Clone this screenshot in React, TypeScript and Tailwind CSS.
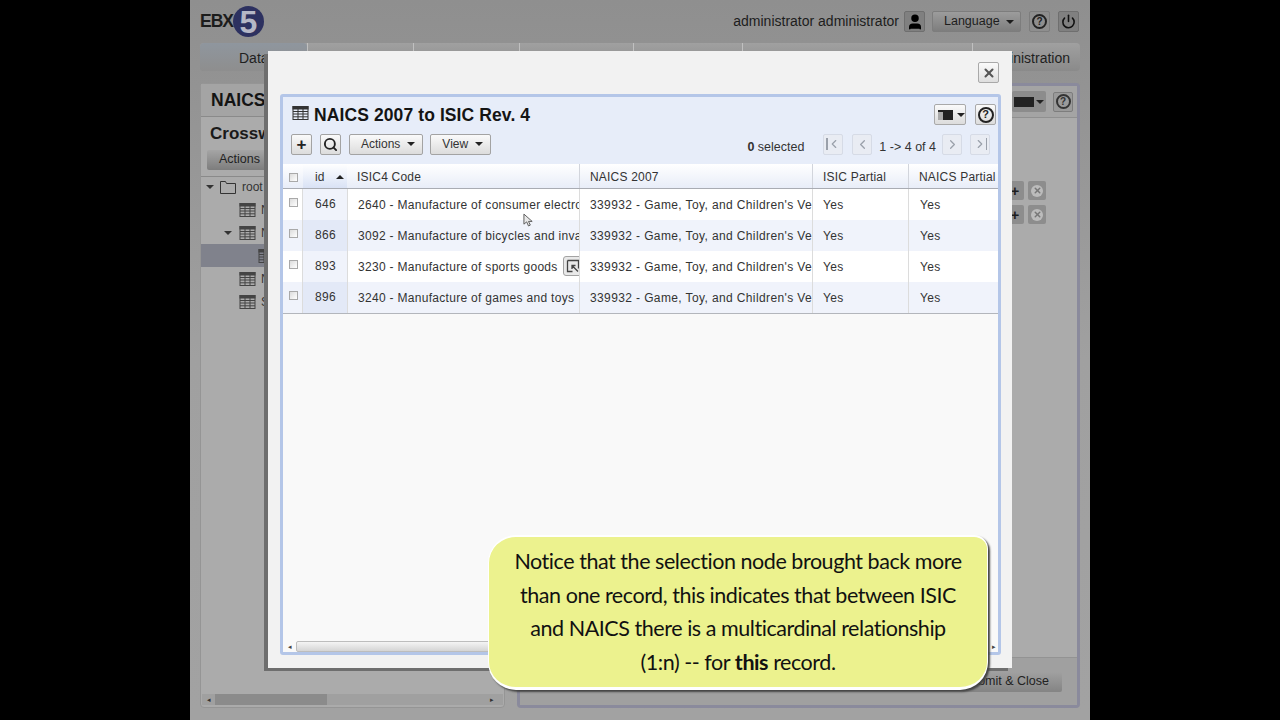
import { ChevronLeft, ChevronRight, Power, Search, User, X } from 'lucide-react'

const rows = [
  { id: '646', isic: '2640 - Manufacture of consumer electro' },
  { id: '866', isic: '3092 - Manufacture of bicycles and inva' },
  { id: '893', isic: '3230 - Manufacture of sports goods' },
  { id: '896', isic: '3240 - Manufacture of games and toys' },
]

const gridCols = 'grid-cols-[20px_44px_232px_233px_96px_90px]'

function TableIcon({ className }: { className: string }) {
  return (
    <svg viewBox="0 0 16 14" className={className} fill="none" stroke="currentColor" strokeWidth="1">
      <rect x="0.5" y="0.5" width="15" height="13" />
      <rect x="0.5" y="0.5" width="15" height="2.5" fill="currentColor" />
      <path d="M0.5 5.5h15M0.5 8h15M0.5 10.8h15M5.5 3v10.5M10.5 3v10.5" />
    </svg>
  )
}

function Caret({ className }: { className: string }) {
  return <span className={`inline-block w-0 h-0 border-x-[4px] border-x-transparent border-t-[4px] ${className}`} />
}

function HelpIcon({ className }: { className: string }) {
  return (
    <span className={`flex items-center justify-center rounded-full border-2 font-bold ${className}`}>?</span>
  )
}

function Checkbox({ className = '' }: { className?: string }) {
  return <span className={`block w-[9px] h-[9px] border border-[#a9a9a9] bg-gradient-to-br from-[#dcdcdc] to-white ${className}`} />
}

function PagerButton({ children }: { children: React.ReactNode }) {
  return (
    <span className="flex items-center justify-center w-[20px] h-[21px] rounded-[2px] border border-[#d6dbe6] bg-[#e9ecf3] text-[#9aa0aa]">
      {children}
    </span>
  )
}

function ToolButton({ label }: { label: string }) {
  return (
    <span className="flex items-center gap-[7px] h-[21px] pl-[11px] pr-[7px] rounded-[2px] border border-[#a3a3a3] bg-gradient-to-b from-[#fafafa] to-[#dcdcdc] text-[12px] text-[#333]">
      {label}
      <Caret className="border-t-[#222]" />
    </span>
  )
}

function Background() {
  return (
    <div className="flex flex-col h-full px-[10px] bg-gradient-to-b from-[#8f8f8f] via-[#a0a0a0] to-[#a2a2a2]">
      {/* Top bar */}
      <div className="flex items-center justify-between h-[43px] shrink-0">
        <div className="flex items-center">
          <span className="w-[33px] text-[17.5px] font-bold tracking-[-1px] text-[#1c1c1c]">EBX</span>
          <span className="flex items-center justify-center w-[31px] h-[31px] rounded-full bg-[#2d3160] text-[32px] font-bold leading-none text-[#b5b7c6]">5</span>
        </div>
        <div className="flex items-center pr-[1px]">
          <span className="text-[14px] text-[#1d1d1d]">administrator administrator</span>
          <span className="flex items-center justify-center w-[21px] h-[21px] ml-[5px] rounded-[2px] border border-[#6f6f6f] bg-[#808080]">
            <User className="w-[18px] h-[18px] text-black" fill="black" strokeWidth={2} />
          </span>
          <span className="flex items-center gap-[6px] h-[21px] w-[89px] pl-[11px] ml-[7px] rounded-[2px] border border-[#7d7d7d] bg-gradient-to-b from-[#9c9c9c] to-[#7e7e7e] text-[12.5px] text-[#1d1d1d]">
            Language
            <Caret className="border-t-[#1d1d1d]" />
          </span>
          <span className="flex items-center justify-center w-[21px] h-[21px] ml-[8px] rounded-[2px] border border-[#7d7d7d] bg-[#8e8e8e]">
            <HelpIcon className="w-[15px] h-[15px] text-[10px] border-[#222] text-[#222]" />
          </span>
          <span className="flex items-center justify-center w-[21px] h-[21px] ml-[8px] rounded-[2px] border border-[#6f6f6f] bg-[#808080]">
            <Power className="w-[15px] h-[15px] text-[#111]" strokeWidth={2.5} />
          </span>
        </div>
      </div>

      {/* Tabs */}
      <div className="flex h-[28px] shrink-0 rounded-[4px] bg-gradient-to-b from-[#a0a0a0] to-[#8a8a8a] text-[14px] text-[#1f1f1f]">
        <span className="flex items-center w-[107px] pl-[39px] pt-[2px] rounded-[4px] bg-gradient-to-b from-[#8f969e] to-[#8e8e8e]">Data</span>
        <span className="w-[106px] border-l border-[#c0c0c0]" />
        <span className="w-[106px] border-l border-[#c0c0c0]" />
        <span className="w-[114px] border-l border-[#c0c0c0]" />
        <span className="w-[109px] border-l border-[#c0c0c0]" />
        <span className="w-[230px] border-l border-[#c0c0c0]" />
        <span className="flex items-center justify-end flex-1 pr-[10px] pt-[2px] border-l border-[#c0c0c0]">Administration</span>
      </div>

      {/* Panels */}
      <div className="flex gap-[12px] mt-[12px] mb-[12px] flex-1 min-h-0">
        <div className="flex flex-col w-[305px] rounded-[4px] border border-[#959595] bg-[#ababab]">
          <div className="h-[33px] px-[10px] flex items-center text-[17.5px] font-bold text-[#141414] border-b border-[#8a8a8a] bg-[#a4a4a4]">NAICS</div>
          <div className="h-[60px] flex flex-col border-b border-[#8a8a8a]">
            <div className="px-[9px] pt-[4px] text-[17px] font-bold text-[#1a1a1a]">Crossw</div>
            <div className="flex items-center gap-[4px] ml-[6px] mt-[3px] w-[70px] h-[20px] pl-[12px] bg-gradient-to-b from-[#a5a5a5] to-[#7d7d7d] rounded-[2px] text-[12.5px] text-[#222]">Actions</div>
          </div>
          <div className="flex-1 -mt-[2px] text-[12px] text-[#333]">
            <div className="flex items-center h-[23px] pl-[5px] gap-[6px]">
              <Caret className="border-t-[#333]" />
              <svg viewBox="0 0 16 14" className="w-[16px] h-[14px]" fill="none" stroke="#333"><path d="M0.5 13.5V1.5h5l1 2h9v10z" /></svg>
              <span>root</span>
            </div>
            <div className="flex items-center h-[23px] pl-[38px] gap-[5px]"><TableIcon className="w-[17px] h-[14px] text-[#444]" />N</div>
            <div className="flex items-center h-[23px] pl-[23px] gap-[5px]"><Caret className="border-t-[#333]" /><TableIcon className="w-[17px] h-[14px] ml-[2px] text-[#444]" />N</div>
            <div className="flex items-center h-[23px] pl-[57px] bg-[#80828c]"><TableIcon className="w-[17px] h-[14px] text-[#444]" /></div>
            <div className="flex items-center h-[23px] pl-[38px] gap-[5px]"><TableIcon className="w-[17px] h-[14px] text-[#444]" />N</div>
            <div className="flex items-center h-[23px] pl-[38px] gap-[5px]"><TableIcon className="w-[17px] h-[14px] text-[#444]" />S</div>
          </div>
          <div className="flex items-center justify-between h-[11px] mb-[2px] mx-[1px] bg-[#a0a0a0] text-[#333]">
            <span className="w-[13px] text-[7px] leading-none pl-[5px]">◂</span>
            <span className="flex-1 self-stretch max-w-[112px] bg-[#8b8b8b] mr-auto" />
            <span className="w-[13px] text-[7px] leading-none">▸</span>
          </div>
        </div>

        <div className="flex flex-col flex-1 rounded-[4px] border-[3px] border-[#8a8a9c] bg-[#ababab]">
          <div className="h-[32px] flex items-center justify-end gap-[7px] pr-[4px] border-b border-[#909090] bg-[#a4a4a4]">
            <span className="flex items-center gap-[2px] h-[21px] px-[2px] rounded-[2px] bg-[#8c8c8c]">
              <span className="w-[20px] h-[10px] bg-[#222]" />
              <Caret className="border-t-[#222]" />
            </span>
            <span className="flex items-center justify-center w-[20px] h-[20px] rounded-[2px] border border-[#7d7d7d] bg-[#9a9a9a]">
              <HelpIcon className="w-[15px] h-[15px] text-[10px] border-[#333] text-[#333]" />
            </span>
          </div>
          <div className="flex-1 flex flex-col items-end gap-[5px] pt-[63px] pr-[31px]">
            {[0, 1].map(i => (
              <span key={i} className="flex items-center gap-[4px]">
                <span className="flex items-center justify-center w-[18px] h-[19px] rounded-[2px] bg-[#8d8d8d] text-[15px] font-bold leading-none text-[#1d1d1d]">+</span>
                <span className="flex items-center justify-center w-[18px] h-[19px] rounded-[2px] bg-[#8d8d8d]">
                  <span className="flex items-center justify-center w-[12px] h-[12px] rounded-full bg-[#bcbcbc]">
                    <X className="w-[9px] h-[9px] text-[#777]" strokeWidth={4} />
                  </span>
                </span>
              </span>
            ))}
          </div>
          <div className="flex items-center justify-end h-[48px] pr-[15px] border-t border-[#939393] bg-[#a0a0a0]">
            <span className="flex items-center justify-end pr-[13px] w-[100px] h-[20px] rounded-[2px] bg-gradient-to-b from-[#a0a0a0] to-[#848484] text-[12.5px] text-[#222]">Submit &amp; Close</span>
          </div>
        </div>
      </div>
    </div>
  )
}

function Modal() {
  return (
    <div className="absolute left-[78px] top-[51px] w-[744px] h-[617px] flex flex-col bg-[#f2f2f2] shadow-[-4px_3px_0_#6e6e6e] pl-[12px] pr-[11px] pb-[13px]">
      <div className="flex justify-end h-[43px] pt-[11px] pr-[2px] shrink-0">
        <span className="flex items-center justify-center w-[21px] h-[21px] rounded-[2px] border border-[#a9a9a9] bg-gradient-to-b from-[#fbfbfb] to-[#dedede]">
          <X className="w-[14px] h-[14px] text-[#555]" strokeWidth={3.5} />
        </span>
      </div>

      <div className="flex flex-col flex-1 min-h-0 rounded-[3px] border-[3px] border-[#b4c6e8] bg-[#f9f9f9]">
        <div className="h-[67px] shrink-0 bg-[#e7edf9] pl-[8px] pr-[2px]">
          <div className="flex items-center justify-between h-[33px] pt-[2px]">
            <div className="flex items-center gap-[5px] pl-[1px]">
              <TableIcon className="w-[17px] h-[14px] mt-[-3px] text-[#333]" />
              <span className="text-[17.5px] tracking-[0.1px] font-bold text-[#141414] pt-[2px]">NAICS 2007 to ISIC Rev. 4</span>
            </div>
            <div className="flex items-center gap-[9px]">
              <span className="flex items-center gap-[4px] h-[21px] w-[32px] pl-[3px] rounded-[2px] border border-[#a9a9a9] bg-gradient-to-b from-[#fafafa] to-[#dcdcdc]">
                <span className="flex w-[15px] h-[10px] bg-[#222] border-t-[2px] border-[#222]">
                  <span className="w-[5px] bg-[#aaa]" />
                </span>
                <Caret className="border-t-[#222]" />
              </span>
              <span className="flex items-center justify-center w-[21px] h-[21px] rounded-[2px] border border-[#a9a9a9] bg-gradient-to-b from-[#fafafa] to-[#dcdcdc]">
                <HelpIcon className="w-[16px] h-[16px] text-[11px] border-[#222] text-[#222]" />
              </span>
            </div>
          </div>
          <div className="flex items-center h-[24px] mt-[2px]">
            <span className="flex items-center justify-center w-[21px] h-[21px] rounded-[2px] border border-[#a3a3a3] bg-gradient-to-b from-[#fafafa] to-[#dcdcdc] text-[17px] font-bold leading-none text-[#222]">+</span>
            <span className="flex items-center justify-center w-[21px] h-[21px] ml-[8px] rounded-[2px] border border-[#a3a3a3] bg-gradient-to-b from-[#fafafa] to-[#dcdcdc]">
              <Search className="w-[15px] h-[15px] text-[#222]" strokeWidth={3} />
            </span>
            <span className="ml-[8px]"><ToolButton label="Actions" /></span>
            <span className="ml-[7px]"><ToolButton label="View" /></span>
            <span className="ml-auto text-[12.5px] text-[#333] pt-[7px]"><b>0</b> selected</span>
            <div className="flex items-center ml-[19px] mr-[6px]">
              <PagerButton><span className="w-[1.5px] h-[12px] bg-[#9aa0aa]" /><ChevronLeft className="w-[14px] h-[14px] -ml-[1px]" /></PagerButton>
              <span className="ml-[9px]"><PagerButton><ChevronLeft className="w-[15px] h-[15px]" /></PagerButton></span>
              <span className="ml-[7px] mr-[6px] pt-[7px] text-[12.5px] text-[#333]">1 -&gt; 4 of 4</span>
              <PagerButton><ChevronRight className="w-[15px] h-[15px]" /></PagerButton>
              <span className="ml-[8px]"><PagerButton><ChevronRight className="w-[14px] h-[14px] -mr-[1px]" /><span className="w-[1.5px] h-[12px] bg-[#9aa0aa]" /></PagerButton></span>
            </div>
          </div>
        </div>

        {/* Table head */}
        <div className={`grid ${gridCols} h-[25px] shrink-0 border-b border-[#a9acb3] bg-gradient-to-b from-white to-[#e8edf8] text-[12px] tracking-[0.2px] text-[#333] overflow-hidden`}>
          <span className="flex items-center pl-[6px]"><Checkbox className="mt-[2px]" /></span>
          <span className="flex items-center pl-[12px] pt-[2px] gap-[11px] bg-gradient-to-b from-white to-[#d9e2f5]">
            id
            <span className="w-0 h-0 border-x-[4px] border-x-transparent border-b-[4px] border-b-[#222]" />
          </span>
          <span className="flex items-center pl-[10px] pt-[2px]">ISIC4 Code</span>
          <span className="flex items-center pl-[10px] pt-[2px] border-l border-[#d2d5dc]">NAICS 2007</span>
          <span className="flex items-center pl-[10px] pt-[2px] border-l border-[#d2d5dc]">ISIC Partial</span>
          <span className="flex items-center pl-[10px] pt-[2px] border-l border-[#d2d5dc] whitespace-nowrap">NAICS Partial</span>
        </div>

        {/* Table rows */}
        <div className="shrink-0 border-b border-[#b3b6bc]">
          {rows.map((row, i) => (
            <div key={row.id} className={`grid ${gridCols} h-[31px] text-[12px] tracking-[0.3px] text-[#333] ${i % 2 ? 'bg-[#f0f3fb]' : 'bg-white'}`}>
              <span className="flex items-start pl-[6px] pt-[9px] border-r border-[#dcdcdc] w-[20px]"><Checkbox /></span>
              <span className={`flex items-center pl-[12px] pb-[1px] ${i % 2 ? 'bg-[#e3e9f7]' : 'bg-[#f0f3fb]'}`}>{row.id}</span>
              <span className="relative flex items-center pl-[10px] overflow-hidden whitespace-nowrap border-l border-[#dcdcdc] pt-[1px]">
                {row.isic}
                {i === 2 && (
                  <span className="absolute left-[215px] top-[5px] flex items-center justify-center w-[20px] h-[20px] rounded-[3px] border border-[#a3a3a3] bg-[#e9e9e9]">
                    <svg viewBox="0 0 14 14" className="w-[14px] h-[14px]" fill="none" stroke="#444" strokeWidth="1.3">
                      <path d="M1.5 1.5h11v8M1.5 1.5v11h5M12 12.5L6 6.5M6 10V6.5h3.5" />
                    </svg>
                  </span>
                )}
              </span>
              <span className="flex items-center pl-[10px] tracking-[0.38px] overflow-hidden whitespace-nowrap border-l border-[#dcdcdc] pt-[1px]">339932 - Game, Toy, and Children's Ve</span>
              <span className="flex items-center pl-[10px] border-l border-[#dcdcdc]">Yes</span>
              <span className="flex items-center pl-[11px] border-l border-[#dcdcdc]">Yes</span>
            </div>
          ))}
        </div>

        <div className="flex-1" />

        {/* Bottom scrollbar */}
        <div className="flex items-center h-[12px] shrink-0 text-[#444]">
          <span className="w-[13px] pl-[5px] text-[7px] leading-none">◂</span>
          <span className="w-[300px] h-[11px] rounded-[2px] border border-[#bdbdbd] bg-gradient-to-b from-[#f4f4f4] to-[#d5d5d5]" />
          <span className="ml-auto pr-[2px] text-[7px] leading-none">▸</span>
        </div>
      </div>
    </div>
  )
}

export default function App() {
  return (
    <div className="flex justify-center w-[1280px] h-[720px] overflow-hidden bg-black font-['Liberation_Sans',Arial,sans-serif]">
      <div className="relative w-[900px] h-full">
        <Background />
        <Modal />

        {/* Mouse cursor over the table */}
        <svg viewBox="0 0 12 16" className="absolute left-[333px] top-[213px] w-[11px] h-[15px]" fill="#e8e8e8" stroke="#555" strokeWidth="1">
          <path d="M1 1v11l3-2.5 2 4.5 2-1-2-4h4z" />
        </svg>

        {/* Tutorial callout */}
        <div className="absolute left-[298px] top-[535px] flex flex-col items-center justify-center w-[500px] h-[155px] rounded-tl-[28px] rounded-tr-[14px] rounded-bl-[28px] rounded-br-[28px] border-t-[2px] border-b-[3px] border-x-[1px] border-white bg-[#ecf28e] shadow-[2px_2px_2px_#444] font-['Lato',sans-serif] text-[21.5px] tracking-[-0.45px] leading-[33.5px] text-[#111] whitespace-nowrap">
          <p>Notice that the selection node brought back more</p>
          <p>than one record, this indicates that between ISIC</p>
          <p>and NAICS there is a multicardinal relationship</p>
          <p>(1:n) -- for <b>this</b> record.</p>
        </div>
      </div>
    </div>
  )
}
